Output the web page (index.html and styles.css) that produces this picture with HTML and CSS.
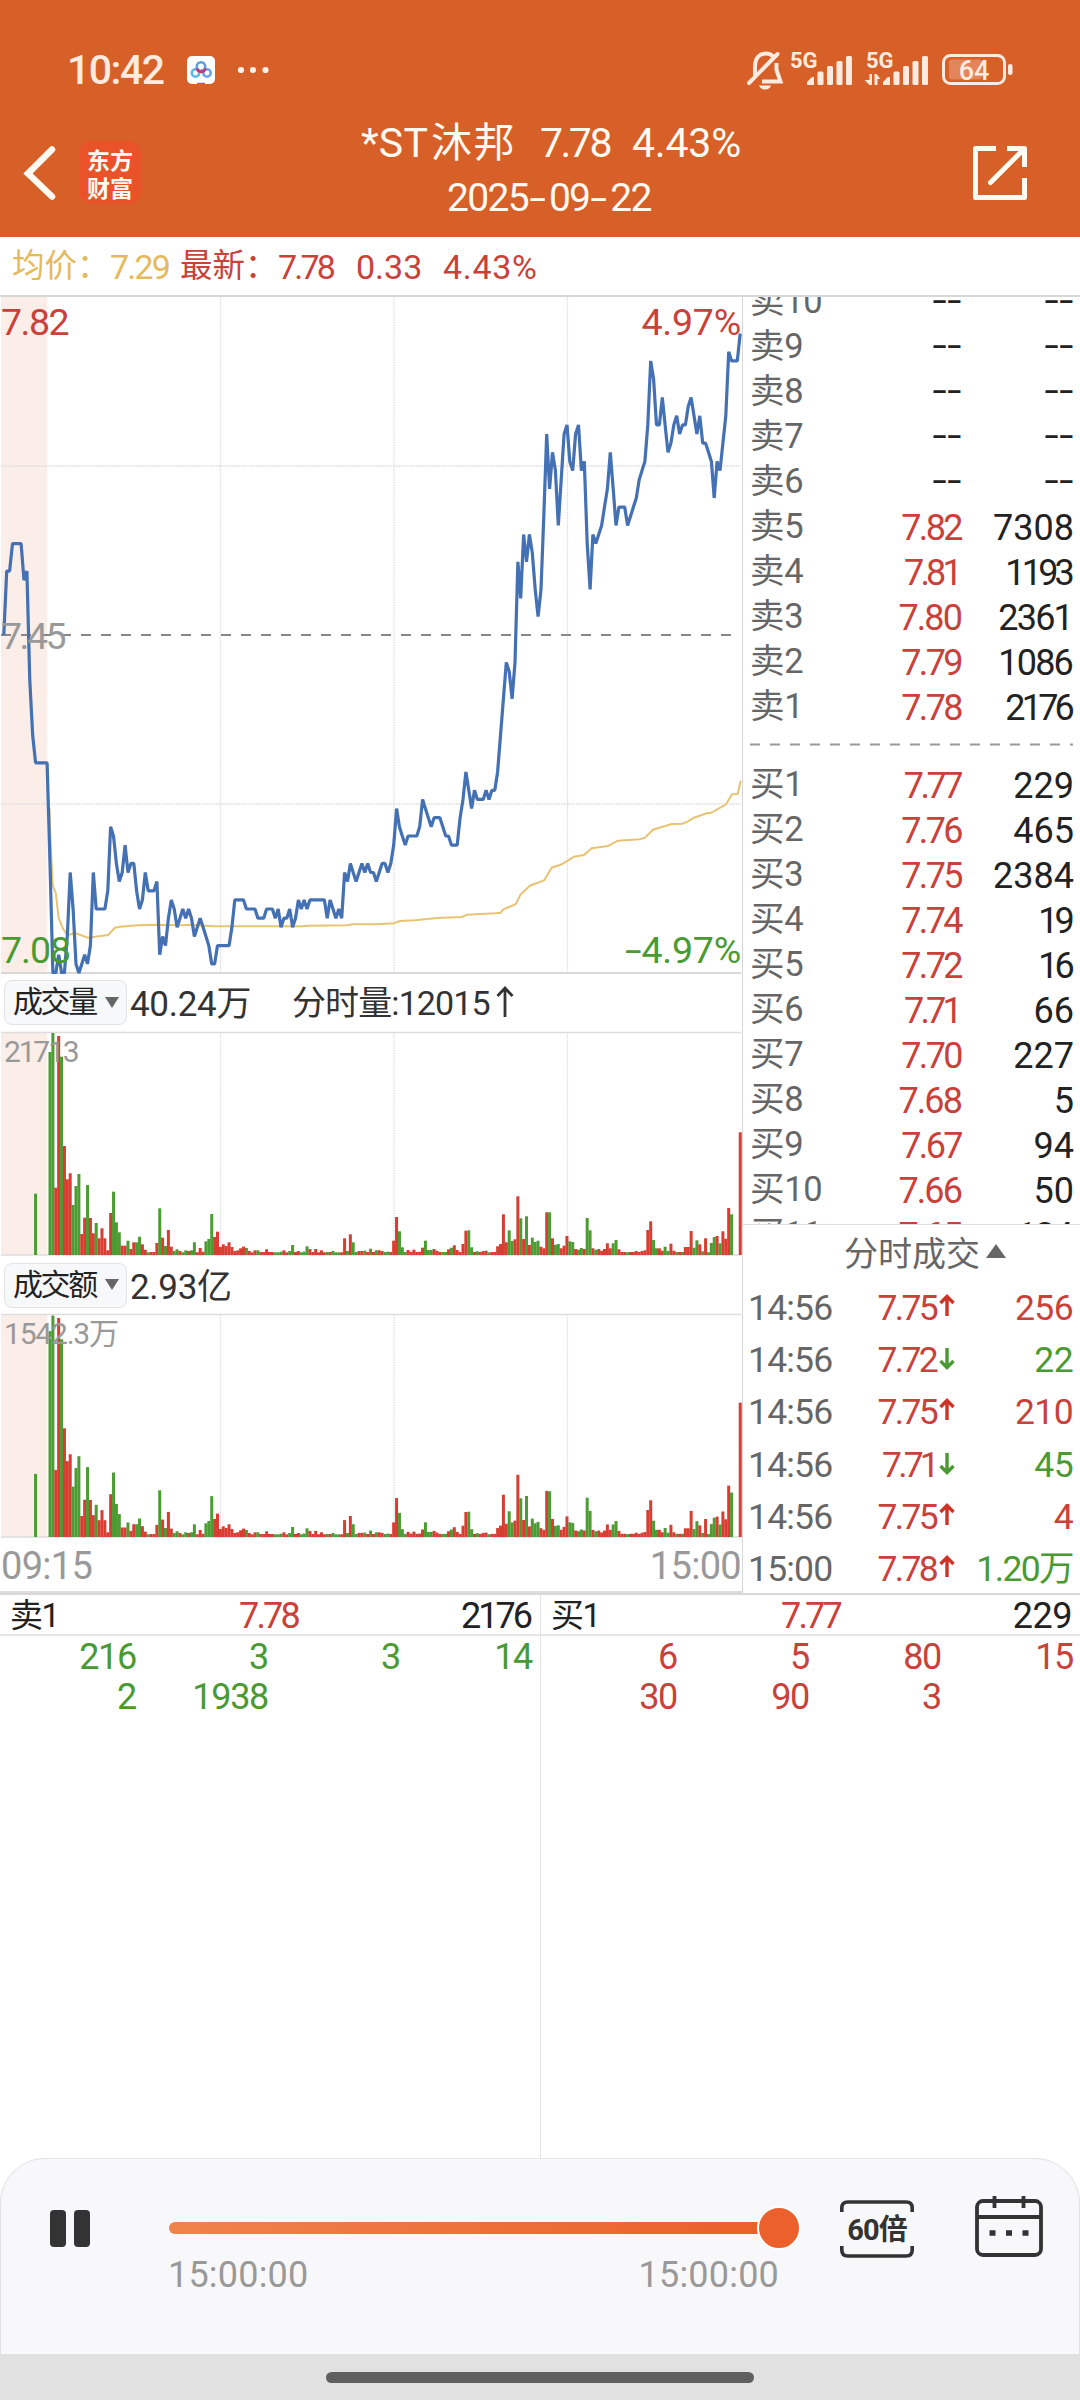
FILE: index.html
```html
<!DOCTYPE html>
<html lang="zh-CN">
<head>
<meta charset="utf-8">
<title>*ST沐邦 2025-09-22</title>
<link rel="stylesheet" href="styles.css">
</head>
<body>
<div class="app">
  <header class="top">
    <div class="status">
      <span class="clock">10:42</span>
      <svg class="appicon" width="28" height="28" viewBox="0 0 28 28"><rect width="28" height="28" rx="5" fill="#fff"/><g fill="none" stroke-width="2.6"><circle cx="8.500" cy="17" r="3.700" stroke="#5cb8e8"/><circle cx="20" cy="17" r="3.700" stroke="#6aa5ee"/><circle cx="14" cy="10.500" r="4.200" stroke="#5b9fe0"/><path d="M10 12.500a4.300 4.300 0 0 0 8.400 0" stroke="#c9356e"/></g><path d="M10 27.500h8" stroke="#7a6bd0" stroke-width="1.500"/></svg>
      <svg class="dots" width="32" height="8" viewBox="0 0 32 8" fill="#fff0e8"><circle cx="4" cy="4" r="3.100"/><circle cx="16" cy="4" r="3.100"/><circle cx="28.500" cy="4" r="3.100"/></svg>
      <svg class="sysicons" width="270" height="42" viewBox="745 49 270 42" fill="#ffeadf">
        <g fill="none" stroke="#ffeadf" stroke-width="4"><path d="M755 76V66.500C755 58 759.500 53.500 766 53.500C769 53.500 771.500 54.500 773 56.500M776.500 63V70L780.500 81.500H762"/><path d="M749 83L777.500 54" stroke-linecap="round"/></g>
        <path d="M759 85.500h12q-1.500 4-6 4t-6-4z"/>
        <text x="790" y="67.500" class="fiveg">5G</text>
        <g id="sig"><path d="M807 85V82l5-5h2v8z"/><rect x="817.500" y="71.500" width="6" height="13.500" rx="1.500"/><rect x="827" y="66" width="6" height="19" rx="1.500"/><rect x="836.500" y="61" width="6" height="24" rx="1.500"/><rect x="846" y="56" width="6" height="29" rx="1.500"/></g>
        <text x="866" y="67.500" class="fiveg">5G</text>
        <use href="#sig" x="76"/>
        <path d="M869.500 74h2.500v11h-2.500l-5-5h5zM874.500 85V74h2l4 5h-3v6z"/>
        <rect x="943.500" y="55.500" width="61" height="28" rx="7" fill="none" stroke="#ffeadf" stroke-width="3"/>
        <rect x="949" y="59.500" width="33" height="20" rx="3" opacity=".28"/>
        <rect x="1008" y="64" width="4.500" height="11" rx="2"/>
        <text x="974" y="79.500" class="batt">64</text>
      </svg>
    </div>
    <div class="titlebar">
      <svg class="back" width="34" height="58" viewBox="0 0 34 58"><path d="M30 5.500L6 29.500L30 52.500" fill="none" stroke="#fffaf2" stroke-width="6.500" stroke-linecap="round"/></svg>
      <div class="logo">东方<br>财富</div>
      <div class="title"><div class="name"><span class="st">*ST<u>沐邦</u></span><span class="p1">7.78</span><span>4.43%</span></div><div class="date">2025<s>-</s>09<s>-</s>22</div></div>
      <svg class="share" width="56" height="56" viewBox="0 0 56 56" fill="none" stroke="#fffaf2" stroke-width="5" stroke-linejoin="round"><path d="M24 3.500H3.500V52.500H52.500V33M35 3.500H52.500V22"/><path d="M50 6L18.500 37.500" stroke-linecap="round"/></svg>
    </div>
  </header>

  <div class="info"><span class="avg">均价：</span><span class="avg v1">7.29</span><span class="lat">最新：</span><span class="v2">7.78</span><span class="v3">0.33</span><span class="v4">4.43%</span></div>

  <main class="main">
    <section class="charts">
      <div class="plot">
        <svg id="price" width="742" height="677" viewBox="0 297 742 677"></svg>
        <span class="lb red tl">7.82</span><span class="lb red tr">4.97%</span>
        <span class="lb gray ml">7.45</span>
        <span class="lb green bl">7.08</span><span class="lb green br"><s>-</s>4.97%</span>
      </div>
      <div class="ind"><span class="pick">成交量<b></b></span><span class="val">40.24万</span><span class="val2">分时量:12015<svg width="20" height="32" viewBox="0 0 20 32"><path d="M10 31V2M2.500 10L10 2L17.500 10" fill="none" stroke="#333" stroke-width="2.800"/></svg></span></div>
      <div class="plot"><svg id="volume" width="742" height="226" viewBox="0 1031 742 226"></svg><span class="lb cap">21713</span></div>
      <div class="ind ind2"><span class="pick">成交额<b></b></span><span class="val">2.93亿</span></div>
      <div class="plot"><svg id="amount" width="742" height="225" viewBox="0 1313 742 225"></svg><span class="lb cap cap2">1542.3万</span></div>
      <div class="times"><span>09:15</span><span>15:00</span></div>
    </section>

    <aside class="side">
      <div class="book">
        <div class="lv"><span>卖10</span><em class="nil">--</em><em class="nil">--</em></div>
        <div class="lv"><span>卖9</span><em class="nil">--</em><em class="nil">--</em></div>
        <div class="lv"><span>卖8</span><em class="nil">--</em><em class="nil">--</em></div>
        <div class="lv"><span>卖7</span><em class="nil">--</em><em class="nil">--</em></div>
        <div class="lv"><span>卖6</span><em class="nil">--</em><em class="nil">--</em></div>
        <div class="lv"><span>卖5</span><em>7.82</em><em>7308</em></div>
        <div class="lv"><span>卖4</span><em class="n">7.81</em><em class="n">1193</em></div>
        <div class="lv"><span>卖3</span><em class="w">7.80</em><em class="m">2361</em></div>
        <div class="lv"><span>卖2</span><em>7.79</em><em class="m">1086</em></div>
        <div class="lv"><span>卖1</span><em>7.78</em><em class="n">2176</em></div>
        <div class="gap"><svg width="323" height="3"><path d="M0 1.500H323" stroke="#999" stroke-width="2" stroke-dasharray="10 10"/></svg></div>
        <div class="lv"><span>买1</span><em class="n2">7.77</em><em>229</em></div>
        <div class="lv"><span>买2</span><em>7.76</em><em>465</em></div>
        <div class="lv"><span>买3</span><em>7.75</em><em>2384</em></div>
        <div class="lv"><span>买4</span><em>7.74</em><em class="n">19</em></div>
        <div class="lv"><span>买5</span><em>7.72</em><em class="n">16</em></div>
        <div class="lv"><span>买6</span><em class="n">7.71</em><em>66</em></div>
        <div class="lv"><span>买7</span><em>7.70</em><em>227</em></div>
        <div class="lv"><span>买8</span><em class="w">7.68</em><em>5</em></div>
        <div class="lv"><span>买9</span><em>7.67</em><em>94</em></div>
        <div class="lv"><span>买10</span><em class="w">7.66</em><em>50</em></div>
        <div class="lv"><span>买11</span><em class="w">7.65</em><em class="m">134</em></div>
      </div>
      <div class="deals">
        <h2>分时成交<b></b></h2>
        <div class="dl"><span>14:56</span><em>7.75</em><svg class="up"><use href="#arr"/></svg><strong class="red">256</strong></div>
        <div class="dl"><span>14:56</span><em>7.72</em><svg class="dn"><use href="#arr"/></svg><strong class="green">22</strong></div>
        <div class="dl"><span>14:56</span><em>7.75</em><svg class="up"><use href="#arr"/></svg><strong class="red m">210</strong></div>
        <div class="dl"><span>14:56</span><em class="n">7.71</em><svg class="dn"><use href="#arr"/></svg><strong class="green">45</strong></div>
        <div class="dl"><span>14:56</span><em>7.75</em><svg class="up"><use href="#arr"/></svg><strong class="red">4</strong></div>
        <div class="dl"><span>15:00</span><em>7.78</em><svg class="up"><use href="#arr"/></svg><strong class="green wan">1.20万</strong></div>
      </div>
      <svg width="0" height="0" class="defs"><defs><path id="arr" d="M8 22V3M1.500 9L8 2.500L14.500 9" fill="none" stroke="currentColor" stroke-width="3.400"/></defs></svg>
    </aside>
  </main>

  <section class="queue">
    <div class="q">
      <div class="qh"><span>卖1</span><em class="red">7.78</em><strong>2176</strong></div>
      <div class="qg green"><span>216</span><span>3</span><span>3</span><span>14</span><span>2</span><span>1938</span></div>
    </div>
    <div class="q">
      <div class="qh"><span>买1</span><em class="red">7.77</em><strong class="w3">229</strong></div>
      <div class="qg red"><span>6</span><span>5</span><span>80</span><span>15</span><span>30</span><span>90</span><span>3</span></div>
    </div>
  </section>

  <footer class="player">
    <div class="pause"><i></i><i></i></div>
    <div class="seek">
      <div class="track"><div class="thumb"></div></div>
      <div class="st2"><span>15:00:00</span><span>15:00:00</span></div>
    </div>
    <div class="speed"><svg width="74" height="58" viewBox="0 0 74 58" fill="none" stroke="#333" stroke-width="3.600"><path d="M1.800 12V8q0-6 6-6h58.400q6 0 6 6v4M1.800 46v4q0 6 6 6h58.400q6 0 6-6v-4"/></svg><span>60倍</span></div>
    <svg class="cal" width="68" height="62" viewBox="0 0 68 62" fill="none" stroke="#333" stroke-width="3.800"><rect x="2" y="5" width="64" height="54" rx="6"/><path d="M2 21H66M19.500 0V12M48.500 0V12"/><path d="M14.500 37h6M31 37h6M47.500 37h6" stroke-width="5.500"/></svg>
  </footer>
  <div class="nav"><i></i></div>
</div>
<script src="chart.js"></script>
</body>
</html>
```
FILE: styles.css
```css
*{box-sizing:border-box}
body{margin:0;background:#fff;font-family:Roboto,"Noto Sans CJK SC",sans-serif;color:#222}
em,i,strong,b{font-style:normal;font-weight:400}
s,u{text-decoration:none}
svg{display:block}
.app{width:1080px;height:2400px;display:flex;flex-direction:column;overflow:hidden}
.red{color:#c9413a}.green{color:#4a9a33}.gray{color:#999}
.top{height:237px;background:#d75f28;color:#fffaf2;display:flex;flex-direction:column;flex:none}
.status{height:118px;padding:49px 65px 0 67px;display:flex;align-items:flex-start}
.clock{font-size:41px;line-height:43px;font-weight:500;color:#ffeadf;letter-spacing:-1.500px;width:120px;white-space:nowrap}
.appicon{margin-top:7px}
.dots{margin:17px 0 0 22px}
.sysicons{margin-left:auto}
.fiveg{font-size:22px;font-weight:700}
.batt{font-size:27px;font-weight:500;text-anchor:middle}
.titlebar{height:119px;display:flex;align-items:flex-start;padding:0 52px 0 22px}
.back{margin-top:26px}
.logo{margin:23px 0 0 23px;width:62px;height:63px;border-radius:13px;background:#ea5329;font:700 23px/28px "Noto Sans CJK SC",sans-serif;text-align:center;padding-top:4px}
.title{flex:1;padding-left:220px;display:flex;flex-direction:column}
.name{height:50px;font-size:41px;line-height:50px;display:flex;white-space:nowrap;letter-spacing:-.2px}
.name .st{width:179px;letter-spacing:.2px}
.name u{letter-spacing:1.500px;margin-left:3px}
.name .p1{width:92px;letter-spacing:-2.500px}
.date{height:54px;padding-left:86px;font-size:39px;line-height:60px;white-space:nowrap;letter-spacing:-1.700px}
.date s{display:inline-block;width:21px;text-align:center;transform:scaleX(1.55);letter-spacing:0;transform-origin:50% 50%;position:relative;left:-1px}
.share{margin-top:27px}
.info{height:60px;flex:none;border-bottom:2px solid #d6d8d8;display:flex;align-items:center;font-size:34px;color:#c9413a;white-space:nowrap;padding-left:12px;letter-spacing:-1px}
.info span{line-height:42px;padding-top:1px}
.info .avg{color:#e5b95c;width:98px;font-size:32.500px;letter-spacing:0;padding-top:0}
.info .v1{width:70px;font-size:34px;letter-spacing:-1.800px;padding-top:1px}
.info .lat{width:98px;font-size:32.500px;letter-spacing:0;padding-top:0}
.info .v2{width:78px;letter-spacing:-2.800px}.info .v3{width:87px;letter-spacing:0}.info .v4{letter-spacing:.7px}
.main{height:1298px;flex:none;display:flex;border-bottom:2px solid #d8d8d8}
.charts{width:742px;display:flex;flex-direction:column}
.plot{position:relative;flex:none}
.lb{position:absolute;font-size:37.500px;line-height:40px;letter-spacing:-1.500px;white-space:nowrap}
.tl{left:1px;top:5px}.tr{right:1px;top:5px;letter-spacing:-.2px}
.ml{left:1px;top:319px;letter-spacing:-2.500px}
.bl{left:1px;bottom:4px;letter-spacing:-1px}.br{right:1px;bottom:4px;letter-spacing:-.2px}
.br s{display:inline-block;transform:scaleX(1.6);transform-origin:100% 50%}
.cap{left:4px;top:1px;font-size:30px;color:#999;letter-spacing:-2.200px}
.cap2{letter-spacing:-1.200px}
.ind{height:57px;flex:none;display:flex;align-items:center;padding-left:4px;font-size:35px;color:#333;white-space:nowrap}
.ind2{height:56px}
.pick{width:123px;height:45px;border:1.500px solid #e1e3e7;border-radius:8px;background:#f7f8fa;font-size:30px;line-height:40px;letter-spacing:-2.400px;padding:0 0 1px 8px;color:#222;display:flex;align-items:center}
.pick b{border:7px solid transparent;border-top:11px solid #666;border-bottom:0;margin-left:9px}
.val{width:165px;padding:0 0 4px 3px;letter-spacing:-.3px}
.val2{display:flex;align-items:center;font-size:34px;letter-spacing:-.9px;padding-bottom:4px}
.val2 svg{margin:2px 0 0 5px}
.times{height:55px;display:flex;justify-content:space-between;font-size:38px;line-height:56px;color:#999;padding:0 1px 0 1px;letter-spacing:-.7px;border-bottom:2px solid #ddd}
.side{width:338px;border-left:1.500px solid #d6d6d6;display:flex;flex-direction:column}
.book{height:928px;flex:none;overflow:hidden;border-bottom:1px solid #ddd}
.lv{height:45px;display:grid;grid-template-columns:110px 102px 1fr;padding:0 6px 0 7px;align-items:start}
.lv:first-child{margin-top:-18px}
.lv span{font-size:34.500px;line-height:45px;color:#666;letter-spacing:-.3px}
.lv em{font-size:36px;line-height:48px;text-align:right;color:#222}
.lv em:nth-child(2){color:#c9413a;letter-spacing:-2.600px;padding-right:1px}
.lv em.n:nth-child(n){letter-spacing:-3.800px;padding-right:3px}
.lv em.n2:nth-child(n){letter-spacing:-3.500px;padding-right:2px}
.lv em.m{letter-spacing:-1.800px;padding-right:2px}
.lv em.w:nth-child(n){letter-spacing:-1.900px}
.lv em.nil:nth-child(n){color:#222;letter-spacing:.4px;padding:0;line-height:45px;transform:scaleX(1.42);transform-origin:100% 50%}
.gap{height:33px;padding:14px 0 0 7px}
.deals{display:flex;flex-direction:column}
.deals h2{margin:0;height:57px;font-weight:400;font-size:34px;line-height:54px;color:#666;display:flex;align-items:center;padding-left:101px}
.deals h2 b{border:10px solid transparent;border-bottom:14px solid #666;border-top:0;margin:-5px 0 0 6px}
.dl{height:52.200px;display:grid;grid-template-columns:100px 88px 24px 1fr;font-size:35.500px;line-height:53px;padding:0 7px 0 5px;align-items:start;letter-spacing:-.6px}
.dl span{color:#666;letter-spacing:-.8px}
.dl em{text-align:right;color:#c9413a;letter-spacing:-2.700px}
.dl em.n{letter-spacing:-3.800px}
.dl strong{text-align:right;white-space:nowrap}
.dl .wan{letter-spacing:-1.600px}
.dl svg{width:16px;height:24px;margin:12px 0 0 3px}
.up{color:#cc3326}.dn{color:#4a9a33;transform:rotate(180deg)}
.defs{position:absolute}
.queue{height:563px;flex:none;display:flex}
.q{width:540px}
.q+.q{border-left:1.500px solid #e3e3e3}
.qh{height:41px;border-bottom:2px solid #e6e6e6;display:grid;grid-template-columns:150px 141px 1fr;font-size:36px;line-height:42px;padding:0 8px 0 10px;letter-spacing:-1.500px}
.qh span{font-size:33px;line-height:41px}
.qh em,.qh strong{text-align:right}
.qh em{letter-spacing:-2.800px;padding-right:2px}
.q:first-child em{padding-right:1px;margin-right:2px}
.qh strong{letter-spacing:-3px;padding-right:2px}.qh .w3{letter-spacing:-.5px;padding:0}
.qg{display:grid;grid-template-columns:repeat(4,132px);grid-auto-rows:40px;padding-left:4px;font-size:36px;line-height:42px;letter-spacing:-1.300px;text-align:right}
.player{height:196px;flex:none;background:#f8f8fa;border:1.500px solid #e3e3e4;border-bottom:0;border-radius:45px 45px 0 0;display:flex;align-items:flex-start}
.pause{display:flex;gap:8px;padding:51px 0 0 49px;width:168px}
.pause i{width:16px;height:37px;border-radius:4px;background:#333}
.seek{width:610px;padding-top:63px}
.track{height:12px;border-radius:6px;background:linear-gradient(90deg,#f0824c,#ea5f28);display:flex;justify-content:flex-end;align-items:center}
.thumb{width:44px;height:44px;border:2px solid #fff;border-radius:50%;background:#ec612b;margin-right:-22px;flex:none}
.st2{display:flex;justify-content:space-between;font-size:36px;line-height:42px;color:#999;margin:20px 0 0 -1px;letter-spacing:.2px}
.speed{margin:41px 0 0 61px;width:74px;height:58px;position:relative}
.speed span{position:absolute;inset:0;text-align:center;font:700 29px/60px Roboto,"Noto Sans CJK SC",sans-serif;letter-spacing:-1px;color:#333}
.cal{margin:37px 0 0 61px}
.nav{height:46px;flex:none;background:#e1e1e1;display:flex;justify-content:center}
.nav i{width:428px;height:11px;border-radius:6px;background:#5f5f5f;margin-top:18px}
```
FILE: chart.js
```js
// Minute prices in cents: first 16 are the opening auction, then the trading session.
const prices = `745 752 752 755 755 755 755 751 752 740 734 731 731 731 731 731
720 708 708 710 708 708 712 719 715 709 708 709 710 709 711 719 715 715 715 715 717 724 723 720
718 719 722 719 720 720 717 715 716 719 717 717 717 718 710 712 711 714 716 715 713 714 715 714
715 714 712 713 714 713 712 711 709 709 711 711 711 711 711 713 716 716 716 716 715 715 715 715
714 714 714 715 715 715 714 715 713 714 714 715 713 714 716 715 716 715 716 716 716 716 716 716
714 716 715 714 715 714 719 718 720 719 718 719 720 719 720 719 719 718 719 720 720 719 720 722
726 724 723 722 723 723 723 723 724 727 726 725 724 725 725 725 724 723 723 722 722 722 725 727
730 728 726 728 727 727 727 728 727 728 728 730 734 738 742 741 738 742 753 749 756 753 756 754
750 747 750 758 767 761 765 763 757 762 767 768 764 763 767 768 763 764 755 750 756 755 756 757
759 761 765 761 757 759 759 759 757 758 759 760 762 763 764 768 775 773 768 768 771 768 765 766
768 769 767 768 768 770 771 769 767 769 766 766 765 764 760 764 763 766 769 776 775 775 775 778`.split(/\s+/).map(Number);

// Minute volumes, with the colour of each bar (g: falling, r: rising).
const volumes = `g609 g666 r202 r657 g595 r327 r227 r245 g150 g207 g243 r63 r112 g210 r111 r65 g96 r50 r80 r50
r14 r126 g190 g98 g68 r28 r28 g43 r18 r38 g38 g55 r32 r16 g8 r9 r9 r36 g140 r52 g27 r75 r25 g12 g17 r12 g8 g14 r12 g14
g38 r8 r21 r10 g41 g48 g123 r54 r70 r24 r32 r27 r38 r24 r12 r14 r20 r25 g21 r12 r8 r14 g14 r9 r9 r17 r9 r9 g8 g8
g10 r14 r8 g12 g30 r9 r12 g8 g10 g26 r18 r9 r18 r8 r14 r8 g9 r9 g12 g8 g8 r8 r50 g12 r62 g38 g9 r12 r12 g13
r9 g19 r9 g14 r14 r12 g9 g10 r9 r43 r114 g71 g23 g9 r15 r10 r16 r9 r10 r22 g43 g15 g15 r18 r13 r9 g9 g9 r17 g22
r29 r15 r9 r33 r73 g74 g23 r9 g11 r9 r12 r13 g8 r9 r9 r26 r33 r122 r38 g74 g42 r47 r176 g110 r48 g116 r30 g52 g39 g43
r25 r20 r128 g128 r50 g31 g33 r20 r28 r57 g41 g39 r18 g16 g21 r18 g111 g74 r20 g16 r18 r13 r18 r35 r20 g35 g45 r17 r9 r9
g8 r9 r9 r12 r9 r12 r14 r75 r101 g45 g20 r20 r13 g25 g12 r34 r13 g9 r9 g9 r24 r24 r72 g22 g44 r32 g11 r50 g8 g36
g54 r57 g35 r71 r49 r141 g122 r0 r0 r368`.split(/\s+/);

const average = '49.5,808 50.5,840 52.7,885 55.7,893 58.7,918 62.7,928 67.3,935 75,933 88,937.7 95,936.7 108,935 115,927.7 120,926.7 137,925.3 157,924.7 183,925.3 189,924.7 213,926.3 303,926.3 308,925.7 347,925.3 353,924.3 377,924.3 394,923.3 400,921 415,920.3 437,918 462,917 467,914.7 495,913.3 500.7,912.7 503.3,909.3 515.7,904.3 520.7,894.3 530,885.7 544.3,880.3 551.7,867.7 561.7,864.3 574,856.7 584,855 591.7,848.3 608,846 618,840.7 640,839.3 645,837.7 653,829.7 671.7,824 682.7,823.7 688,821.3 694,817.7 706.7,813.3 710.7,813 726,804.3 732,794.3 737.7,794 740.7,780.7';

const x = k => 50 + 2.888 * k;
const y = c => 635 - (c - 745) * 9.135;
const shade = (top, h) => `<rect x="1" y="${top}" width="46.300" height="${h}" fill="#fbeee8"/>`;
const verticals = (a, b) => [220.5, 394, 567.5].map(v => `<path d="M${v} ${a}V${b}" stroke="#ddd" stroke-width="1.300" stroke-dasharray="1.500 1"/>`).join('');

document.getElementById('price').innerHTML =
  shade(297, 676) + verticals(297, 973) +
  '<path d="M1 466H741M1 804H741" stroke="#ddd" stroke-width="1.300" stroke-dasharray="1.500 1"/>' +
  '<path d="M1 973H741" stroke="#d8d8d8" stroke-width="2"/>' +
  '<path d="M1 635H732" stroke="#888" stroke-width="2" stroke-dasharray="10 10"/>' +
  `<polyline points="${average}" fill="none" stroke="#e9c374" stroke-width="2"/>` +
  `<polyline points="${prices.map((p, i) => x(i - 16).toFixed(1) + ',' + y(p).toFixed(1)).join(' ')}" fill="none" stroke="#4470b4" stroke-width="3.200" stroke-linejoin="bevel"/>`;

function bars(id, top, base, scale) {
  const bar = (k, v) => {
    const h = Math.min(base - top, +v.slice(1) / 3 * scale(k));
    return h ? `<rect x="${(x(k) - 1.5).toFixed(2)}" y="${(base - h).toFixed(1)}" width="3" height="${h.toFixed(1)}" fill="${v[0] === 'g' ? '#4b9c32' : '#d93c31'}"/>` : '';
  };
  document.getElementById(id).innerHTML = shade(top, base - top) + verticals(top, base) +
    `<path d="M1 ${top}H741M1 ${base}H741" stroke="#ddd" stroke-width="1.300"/>` +
    bar(-5, 'g184') + volumes.map((v, k) => bar(k, v)).join('');
}
bars('volume', 1032.5, 1255, () => 1);
bars('amount', 1314.5, 1537, k => prices[k + 16] / 710);
```
